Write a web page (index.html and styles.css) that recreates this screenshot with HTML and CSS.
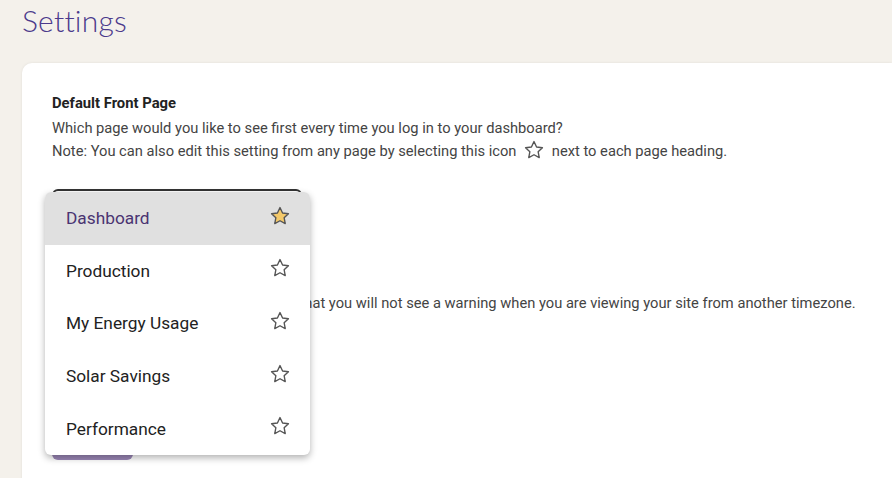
FILE: index.html
```html
<!DOCTYPE html>
<html lang="en">
<head>
    <meta charset="UTF-8">
    <meta name="viewport" content="width=device-width, initial-scale=1.0">
    <title>Settings</title>
    <link rel="stylesheet" href="styles.css">
</head>
<body>

    <h1 class="page-title">Settings</h1>

    <div class="card">
        <!-- Default front page -->
        <div class="setting">
            <div class="setting-title">Default Front Page</div>
            <p class="setting-text">Which page would you like to see first every time you log in to your dashboard?<br>
                Note: You can also edit this setting from any page by selecting this icon
                <svg class="star inline-star" viewBox="0 0 24 24"><path d="M12 2.8l2.8 5.9 6.4.8-4.7 4.4 1.2 6.4L12 17.2l-5.7 3.1 1.2-6.4-4.7-4.4 6.4-.8z"/></svg>
                next to each page heading.</p>

            <div class="select-wrap">
                <div class="select-box">Dashboard</div>

                <!-- Open page menu -->
                <ul class="menu">
                    <li class="menu-item selected">Dashboard
                        <svg class="star filled" viewBox="0 0 24 24"><path d="M12 2.8l2.8 5.9 6.4.8-4.7 4.4 1.2 6.4L12 17.2l-5.7 3.1 1.2-6.4-4.7-4.4 6.4-.8z"/></svg>
                    </li>
                    <li class="menu-item">Production
                        <svg class="star" viewBox="0 0 24 24"><path d="M12 2.8l2.8 5.9 6.4.8-4.7 4.4 1.2 6.4L12 17.2l-5.7 3.1 1.2-6.4-4.7-4.4 6.4-.8z"/></svg>
                    </li>
                    <li class="menu-item">My Energy Usage
                        <svg class="star" viewBox="0 0 24 24"><path d="M12 2.8l2.8 5.9 6.4.8-4.7 4.4 1.2 6.4L12 17.2l-5.7 3.1 1.2-6.4-4.7-4.4 6.4-.8z"/></svg>
                    </li>
                    <li class="menu-item">Solar Savings
                        <svg class="star" viewBox="0 0 24 24"><path d="M12 2.8l2.8 5.9 6.4.8-4.7 4.4 1.2 6.4L12 17.2l-5.7 3.1 1.2-6.4-4.7-4.4 6.4-.8z"/></svg>
                    </li>
                    <li class="menu-item">Performance
                        <svg class="star" viewBox="0 0 24 24"><path d="M12 2.8l2.8 5.9 6.4.8-4.7 4.4 1.2 6.4L12 17.2l-5.7 3.1 1.2-6.4-4.7-4.4 6.4-.8z"/></svg>
                    </li>
                </ul>
            </div>
        </div>

        <!-- Timezone warning -->
        <div class="setting">
            <div class="setting-title">Timezone</div>
            <label class="check-row">
                <input type="checkbox">
                <span>Hide the timezone warning so that you will not see a warning when you are viewing your site from another timezone.</span>
            </label>
        </div>

        <button class="save-btn">Save</button>
    </div>

</body>
</html>
```

FILE: styles.css
```css
body {
    background-color: #f4f1eb;
    font-family: Roboto, "Liberation Sans", sans-serif;
    color: #333;
    margin: 0;
    padding: 0 0 0 22px;
    overflow: hidden;
    height: 478px;
}

.page-title {
    margin: 0;
    padding-top: 2px;
    height: 61px;
    font-family: Lato, sans-serif;
    font-weight: 300;
    font-size: 30px;
    line-height: 36px;
    color: #4b3a8c;
    letter-spacing: 0.2px;
}

.card {
    background-color: #fff;
    border-radius: 10px 0 0 0;
    box-shadow: 0 0 3px rgba(0, 0, 0, 0.08);
    padding: 30px 30px 30px 30px;
    height: 420px;
}

.setting-title {
    font-size: 14.8px;
    font-weight: bold;
    color: #222;
    line-height: 20px;
    margin-bottom: 5px;
}

.setting-text {
    margin: 0;
    font-size: 14.7px;
    line-height: 21px;
    color: #444;
}

.star {
    width: 22px;
    height: 22px;
    fill: none;
    stroke: #555;
    stroke-width: 1.5;
    stroke-linejoin: round;
}

.star.filled {
    fill: #f4c96a;
}

.inline-star {
    vertical-align: -5px;
    margin: 0 3px;
}

.select-wrap {
    position: relative;
    width: 250px;
    margin-top: 27px;
}

.select-box {
    height: 38px;
    border: 2px solid #333;
    border-radius: 6px;
    color: transparent;
}

.menu {
    position: absolute;
    left: -7px;
    top: 3px;
    width: 265px;
    margin: 0;
    padding: 0;
    list-style: none;
    background-color: #fff;
    border-radius: 6px;
    overflow: hidden;
    box-shadow: 0 3px 7px rgba(0, 0, 0, 0.3);
}

.menu-item {
    height: 52.6px;
    display: flex;
    align-items: center;
    justify-content: space-between;
    padding: 0 19px 0 21px;
    font-size: 17.3px;
    color: #222;
}

.menu-item .star {
    margin-top: -5px;
}

.menu-item.selected {
    background-color: #e0e0e0;
    color: #4a3472;
}

.setting + .setting {
    margin-top: 37px;
}

.check-row {
    display: flex;
    align-items: center;
    gap: 30px;
    font-size: 14.7px;
    color: #444;
}

.save-btn {
    margin-top: 112px;
    width: 81px;
    height: 36px;
    border: none;
    border-radius: 6px;
    background-color: #9c88b8;
    color: #fff;
    font-family: Roboto, sans-serif;
    font-size: 14px;
}
```
